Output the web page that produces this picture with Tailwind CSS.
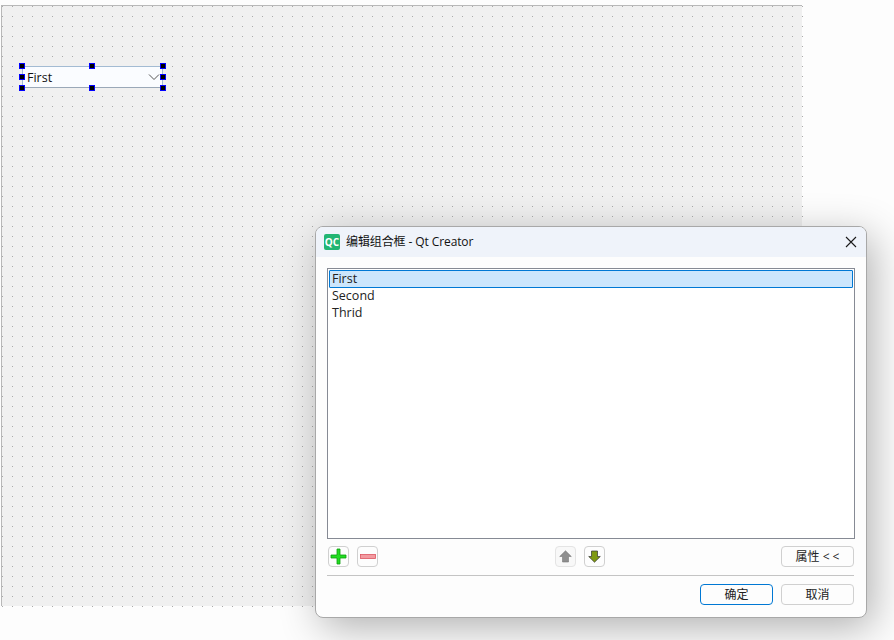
<!DOCTYPE html>
<html lang="zh">
<head>
<meta charset="utf-8">
<script src="https://cdn.jsdelivr.net/npm/@tailwindcss/browser@4"></script>
</head>
<body class="bg-[#fdfdfd] overflow-hidden font-['Open_Sans','Noto_Sans_CJK_SC',sans-serif] text-[12.5px] text-[#111]">
<div class="relative w-[894px] h-[640px] pt-[5px] pl-[1px]">
  <!-- form canvas -->
  <div class="relative w-[801px] h-[601px] bg-[#f0f0f0] border-t border-l border-[#b8b8b8]">
    <svg class="absolute inset-0" width="801" height="601" shape-rendering="crispEdges">
      <defs><pattern id="d" x="0" y="0" width="10" height="10" patternUnits="userSpaceOnUse"><rect width="1" height="1" fill="#aaaaaa"/></pattern></defs>
      <rect width="801" height="601" fill="url(#d)"/>
    </svg>
    <div class="absolute left-[20px] top-[60px] w-[141px] h-[22px] bg-[#fafcff] border border-[#a3bbd3] border-b-[#9aa8b8] flex items-center justify-between pl-[4px] pr-[2px]">
      <span class="leading-none pt-[2px]">First</span>
      <svg width="12" height="8" viewBox="0 0 12 8" fill="none" stroke="#555" stroke-width="1"><path d="M1 1.5 L6 6.5 L11 1.5"/></svg>
    </div>
    <i class="absolute left-[17px] top-[57px] size-[6px] bg-black border border-[#0000ff]"></i>
    <i class="absolute left-[87px] top-[57px] size-[6px] bg-black border border-[#0000ff]"></i>
    <i class="absolute left-[158px] top-[57px] size-[6px] bg-black border border-[#0000ff]"></i>
    <i class="absolute left-[17px] top-[68px] size-[6px] bg-black border border-[#0000ff]"></i>
    <i class="absolute left-[158px] top-[68px] size-[6px] bg-black border border-[#0000ff]"></i>
    <i class="absolute left-[17px] top-[79px] size-[6px] bg-black border border-[#0000ff]"></i>
    <i class="absolute left-[87px] top-[79px] size-[6px] bg-black border border-[#0000ff]"></i>
    <i class="absolute left-[158px] top-[79px] size-[6px] bg-black border border-[#0000ff]"></i>
  </div>

  <!-- dialog window -->
  <div class="absolute left-[315px] top-[226px] w-[552px] h-[392px] bg-[#fdfdfd] border border-[#a8a8a8] rounded-[8px] shadow-[6px_10px_40px_rgba(0,0,0,0.3)] flex flex-col">
    <div class="h-[30px] shrink-0 bg-[#eff3fa] rounded-t-[7px] flex items-center pl-[8px] pr-[9px]">
      <div class="size-[16px] rounded-[2px] bg-[#22b573] text-white text-[10px] font-bold leading-none flex items-center justify-center">QC</div>
      <span class="ml-[6px] text-[12px] tracking-[-0.1px]">编辑组合框 - Qt Creator</span>
      <svg class="ml-auto" width="12" height="12" viewBox="0 0 12 12" fill="none" stroke="#1a1a1a" stroke-width="1.1"><path d="M1 1 L11 11 M11 1 L1 11"/></svg>
    </div>
    <div class="flex-1 flex flex-col pt-[11px] pl-[11px] pr-[12px] pb-[11px]">
      <div class="h-[271px] w-[528px] border border-[#868a94] bg-white p-[1px] text-[#222]">
        <div class="h-[18px] leading-[15px] pl-[2px] bg-[#cce6fc] border-[1.5px] border-[#0078d4] rounded-[1px] w-[524px]">First</div>
        <div class="-mt-[1px] h-[17px] leading-[17px] pl-[3px]">Second</div>
        <div class="h-[17px] leading-[17px] pl-[3px]">Thrid</div>
      </div>
      <div class="mt-[7px] h-[21px] flex items-center">
        <button class="ml-[1px] w-[21px] h-[21px] rounded-[4px] border border-[#d0d0d0] bg-[#fdfdfd] flex items-center justify-center">
          <svg width="17" height="17" viewBox="0 0 17 17"><path d="M7 1h3v6h6v3h-6v6H7v-6H1V7h6z" fill="#22dd22" stroke="#0da00d" stroke-width="0.8"/></svg>
        </button>
        <button class="ml-[8px] w-[21px] h-[21px] rounded-[4px] border border-[#d0d0d0] bg-[#fdfdfd] flex items-center justify-center">
          <svg width="16" height="5" viewBox="0 0 16 5"><rect x="0.5" y="0.5" width="15" height="4" fill="#f29aa0" stroke="#dc5560" stroke-width="0.8"/></svg>
        </button>
        <button class="ml-[177px] w-[21px] h-[21px] rounded-[4px] border border-[#e4e4e4] bg-[#f8f8f8] flex items-center justify-center">
          <svg width="13" height="13" viewBox="0 0 13 13"><path d="M6.5 0.8 L12.3 6.5 H9.5 V12 H3.5 V6.5 H0.7z" fill="#8e8e8e" stroke="#777" stroke-width="0.6"/></svg>
        </button>
        <button class="ml-[8px] w-[21px] h-[21px] rounded-[4px] border border-[#d0d0d0] bg-[#fdfdfd] flex items-center justify-center">
          <svg width="13" height="13" viewBox="0 0 13 13"><path d="M3.5 1 H9.5 V6.5 H12.3 L6.5 12.2 L0.7 6.5 H3.5z" fill="#7f9a12" stroke="#333" stroke-width="0.7"/></svg>
        </button>
        <button class="ml-auto w-[73px] h-[21px] rounded-[4px] border border-[#d0d0d0] bg-[#fdfdfd] text-[12px] leading-none text-[#222]">属性 &lt; &lt;</button>
      </div>
      <div class="mt-[8px] border-t border-[#c4c4c4]"></div>
      <div class="mt-[8px] flex justify-end gap-[8px] text-[12px] text-[#222]">
        <button class="w-[73px] h-[21px] rounded-[4px] border border-[#0078d4] bg-[#fdfdfd] leading-none">确定</button>
        <button class="w-[73px] h-[21px] rounded-[4px] border border-[#d0d0d0] bg-[#fdfdfd] leading-none">取消</button>
      </div>
    </div>
  </div>
</div>
</body>
</html>
